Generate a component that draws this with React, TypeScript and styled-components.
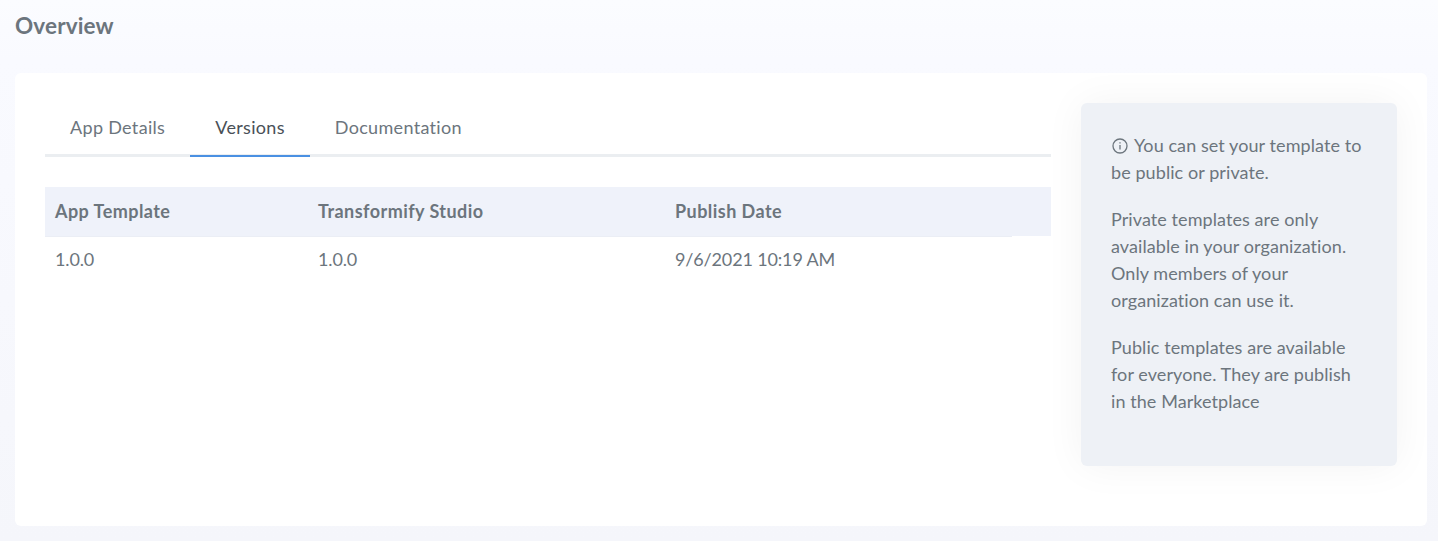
import styled, { createGlobalStyle } from "styled-components";

const GlobalStyle = createGlobalStyle`
  html, body {
    margin: 0;
    padding: 0;
  }
  body {
    height: 541px;
    overflow: hidden;
    font-family: "Lato", "Noto Sans", sans-serif;
    color: #6c757d;
    background: linear-gradient(180deg, #fbfcff 0%, #f9faff 60px, #f5f6fb 100%);
  }
`;

const Page = styled.div`
  padding: 12px 11px 15px 15px;
`;

const Title = styled.h1`
  margin: 0 0 33px;
  height: 28px;
  font-size: 22.5px;
  line-height: 28px;
  font-weight: 700;
  letter-spacing: 0.15px;
  color: #6c757d;
`;

const Card = styled.div`
  display: flex;
  gap: 30px;
  height: 453px;
  box-sizing: border-box;
  padding: 30px;
  background: #fff;
  border-radius: 6px;
`;

const Main = styled.div`
  flex: 1;
  min-width: 0;
`;

const Tabs = styled.div`
  display: flex;
  height: 54px;
  box-sizing: border-box;
  border-bottom: 3px solid #ebeef1;
`;

const Tab = styled.div<{ $active?: boolean }>`
  height: 54px;
  box-sizing: border-box;
  padding: 0 25px;
  font-size: 18px;
  letter-spacing: 0.32px;
  line-height: 48px;
  color: ${(p) => (p.$active ? "#495057" : "#6c757d")};
  border-bottom: 2px solid ${(p) => (p.$active ? "#4a90e2" : "transparent")};
`;

const Table = styled.div`
  margin-top: 30px;
`;

const Row = styled.div<{ $head?: boolean }>`
  display: grid;
  grid-template-columns: 263px 357px 1fr;
  height: ${(p) => (p.$head ? "49px" : "46px")};
  box-sizing: border-box;
  padding: 0 10px 2px;
  align-items: center;
  font-size: 18px;
  font-weight: ${(p) => (p.$head ? 700 : 400)};
  letter-spacing: ${(p) => (p.$head ? "0.45px" : "-0.15px")};
  background: ${(p) => (p.$head ? "#eff2fa" : "transparent")};
`;

const HeadRule = styled.div`
  width: 967px;
  height: 1px;
  background: #ebeef5;
`;

const Aside = styled.aside`
  width: 316px;
  height: 363px;
  flex: none;
  box-sizing: border-box;
  padding: 29px 30px;
  background: #eef1f6;
  border-radius: 6px;
  box-shadow: 0 0 40px rgba(0, 0, 0, 0.05);
  font-size: 18px;
  letter-spacing: 0.08px;
  line-height: 27px;
`;

const Note = styled.p`
  margin: 0 0 20px;
`;

const InfoIcon = styled.svg`
  width: 16px;
  height: 16px;
  vertical-align: -2px;
  margin: 0 6px 0 1px;
`;

export default function App() {
  return (
    <Page>
      <GlobalStyle />
      <Title>Overview</Title>
      <Card>
        <Main>
          <Tabs>
            <Tab>App Details</Tab>
            <Tab $active>Versions</Tab>
            <Tab>Documentation</Tab>
          </Tabs>
          <Table>
            <Row $head>
              <div>App Template</div>
              <div>Transformify Studio</div>
              <div>Publish Date</div>
            </Row>
            <HeadRule />
            <Row>
              <div>1.0.0</div>
              <div>1.0.0</div>
              <div>9/6/2021 10:19 AM</div>
            </Row>
          </Table>
        </Main>
        <Aside>
          <Note>
            <InfoIcon viewBox="0 0 16 16" fill="none" stroke="currentColor" strokeWidth="1.3">
              <circle cx="8" cy="8" r="7" />
              <path d="M8 7v4.5M8 4.2v1.4" />
            </InfoIcon>
            You can set your template to be public or private.
          </Note>
          <Note>
            Private templates are only available in your organization. Only members of your organization can use it.
          </Note>
          <Note>
            Public templates are available for everyone. They are publish in the Marketplace
          </Note>
        </Aside>
      </Card>
    </Page>
  );
}
